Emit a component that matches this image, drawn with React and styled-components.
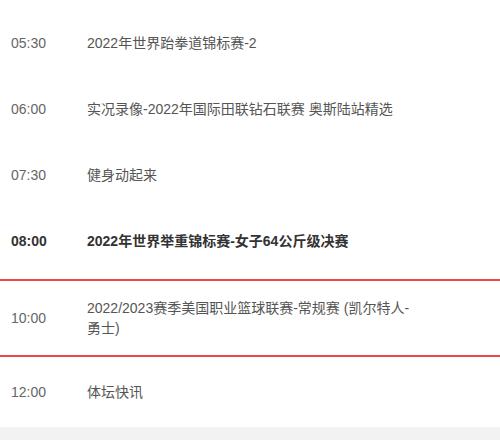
import React from "react";
import styled, { createGlobalStyle } from "styled-components";

const GlobalStyle = createGlobalStyle`
  html, body {
    margin: 0;
    padding: 0;
    background: #fff;
    font-family: "Liberation Sans", "Noto Sans CJK SC", sans-serif;
  }
`;

// Schedule data
const programs = [
  { time: "05:30", title: "2022年世界跆拳道锦标赛-2" },
  { time: "06:00", title: "实况录像-2022年国际田联钻石联赛 奥斯陆站精选" },
  { time: "07:30", title: "健身动起来" },
  { time: "08:00", title: "2022年世界举重锦标赛-女子64公斤级决赛", live: true },
  { time: "10:00", title: "2022/2023赛季美国职业篮球联赛-常规赛 (凯尔特人-勇士)", selected: true },
  { time: "12:00", title: "体坛快讯" },
];

const Page = styled.div`
  width: 500px;
  height: 440px;
  display: flex;
  flex-direction: column;
  overflow: hidden;
`;

const List = styled.ul`
  list-style: none;
  margin: 0;
  padding: 10px 0 0;
`;

const Row = styled.li`
  display: flex;
  align-items: center;
  min-height: ${(p) => (p.selected ? "auto" : "66px")};
  padding: ${(p) => (p.selected ? "17px 0" : "0")};
  margin-top: ${(p) => (p.selected ? "5px" : "0")};
  border-top: ${(p) => (p.selected ? "2px solid #ec4a43" : "none")};
  border-bottom: ${(p) => (p.selected ? "2px solid #ec4a43" : "none")};
  font-size: 14px;
  line-height: 20px;
  color: ${(p) => (p.live ? "#333" : "#666")};
  font-weight: ${(p) => (p.live ? "bold" : "normal")};
  &:last-child {
    min-height: 70px;
  }
`;

const Time = styled.span`
  width: 76px;
  padding-left: 11px;
  flex-shrink: 0;
`;

const Title = styled.span`
  max-width: 336px;
  color: ${(p) => (p.live ? "#333" : "#555")};
`;

const Footer = styled.div`
  flex: 1;
  background: #f2f2f2;
`;

export default function App() {
  return (
    <Page>
      <GlobalStyle />
      <List>
        {programs.map((p) => (
          <Row key={p.time} live={p.live} selected={p.selected}>
            <Time>{p.time}</Time>
            <Title live={p.live}>{p.title}</Title>
          </Row>
        ))}
      </List>
      <Footer />
    </Page>
  );
}
